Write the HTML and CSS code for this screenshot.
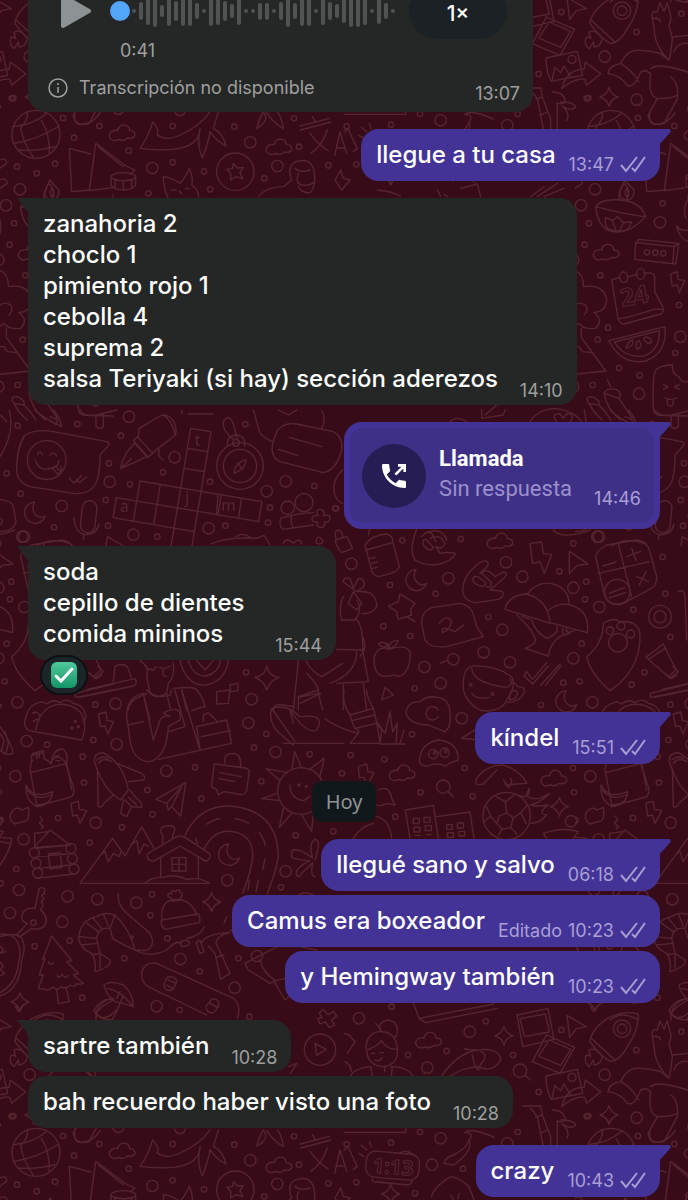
FILE: index.html
```html
<!DOCTYPE html>
<html lang="es">
<head>
  <meta charset="UTF-8">
  <meta name="viewport" content="width=device-width, initial-scale=1.0">
  <title>Chat</title>
  <link rel="stylesheet" href="styles.css">
</head>
<body>
  <!-- wallpaper -->
  <svg class="wallpaper" aria-hidden="true">
    <defs>
      <marker id="dot-s" markerUnits="userSpaceOnUse" markerWidth="24" markerHeight="24" refX="12" refY="12"><circle cx="12" cy="12" r="8"/></marker>
      <marker id="dot-l" markerUnits="userSpaceOnUse" markerWidth="44" markerHeight="44" refX="22" refY="22"><circle cx="22" cy="22" r="17"/></marker>
      <g id="cloud"><path d="M-28 20Q-44 10 -32 -4Q-22 -12 -12 -8Q-8 -28 12 -24Q24 -20 24 -8Q42 -8 40 8Q32 18 18 14Q4 26 -8 18Q-18 24 -28 20Z"/></g>
      <g id="moon"><path d="M0 -32A32 32 0 1 0 32 10Q14 20 2 6Q-12 -10 0 -32Z"/></g>
      <g id="spark"><path d="M0 -28Q6 -6 27 0Q6 6 0 28Q-6 6 -27 0Q-6 -6 0 -28Z"/></g>
      <g id="plane"><path d="M-28 -32L30 2L0 8L-20 34Z"/></g>

      <g id="doodles">
        <g transform="scale(.33333)">
          <circle cx="108" cy="403" r="72"/>
          <path d="M40 380Q100 375 140 340M42 430Q110 420 178 378M62 384Q70 430 100 472M124 362Q150 400 148 460M55 450Q110 455 165 440M62 384Q90 350 80 336"/>
          <path d="M208 445L272 462M208 445L215 575L272 570M287 430L268 572L340 562M287 430L378 498L405 510L392 522M295 440L370 500"/>
          <path d="M333 530A37 12 0 0 1 407 530A37 12 0 0 1 333 530V556Q345 570 370 570Q400 568 407 554V530M345 540V564M370 545V568M395 540V564"/>
          <path d="M150 540Q165 560 176 568Q180 592 160 600Q135 600 134 578Q140 560 150 540ZM155 565Q165 580 155 590Q145 580 155 565"/>
          <path d="M420 445Q470 452 520 448Q600 440 600 385Q590 440 607 474Q625 430 630 395Q650 425 678 438Q670 400 640 385L655 336M420 445Q446 410 458 365Q480 390 472 405Q500 425 540 405Q600 380 630 336"/>
          <path d="M224 340Q220 370 240 374Q280 372 300 338M770 385Q780 350 790 336Q810 360 775 382M800 338Q820 370 850 385Q845 350 832 336"/>
          <circle cx="706" cy="515" r="56"/>
          <path d="M700 490L712 504L730 502L720 518L728 536L708 530L692 540L692 520L680 508L698 506Z"/>
          <path d="M900 378Q940 368 988 355M902 390Q950 378 992 366M938 350L946 366M930 400Q960 440 985 452M982 390Q965 440 932 460M1004 466L1020 396L1040 460M1010 444H1036"/>
          <path d="M775 590Q800 560 850 560L875 540Q860 500 885 486Q930 470 942 510Q950 560 930 578Q905 580 895 560M885 505Q900 520 930 510M895 520Q885 550 905 555Q925 560 945 545"/>
          <path d="M505 595Q490 565 490 530Q520 535 540 550Q555 535 568 505Q582 540 575 555Q600 570 595 598M515 570H528M556 566H568M538 574L544 580"/>
          <path d="M0 480Q20 470 20 490L0 505M0 540Q20 530 22 550L0 565"/>
          <path d="M1005 540L1022 510L1030 535L1050 540L1025 570Z"/>
          <use href="#cloud" x="365" y="400"/><use href="#cloud" x="835" y="442"/>
          <path class="dots-s" d="M298 378L222 413L386 452L165 491L51 500L110 520L518 378L703 380L882 355L518 487L612 514L897 440L985 496L793 535L631 568L445 580L40 294"/>
          <path class="dots-l" d="M457 504L751 427L832 498L60 568L540 330L355 326"/>
        </g>

        <g transform="translate(0 -18) scale(.33333)">
          <circle cx="960" cy="149" r="47"/>
          <path d="M945 130L978 148L950 166ZM958 40L970 28L984 44L1000 34L1010 48L995 60L1004 76L988 82L976 66L960 72L954 56L966 52ZM735 -110L850 -170M735 -110L745 -90L810 -50Q850 -70 910 -70M780 -120Q790 -80 825 -60M820 -60L855 0L925 -60L905 -90"/>
          <path d="M105 60Q140 30 190 60M288 40Q300 0 340 -5M290 40Q310 70 350 30M865 200L890 190L872 220"/>
        </g>

        <g transform="translate(344 -18) scale(.33333)">
          <path d="M519 45L612 26L630 118L536 140ZM528 56L604 42L616 96L542 110ZM607 105L692 142L648 220L565 185ZM616 120L680 148L650 196L584 168Z"/>
          <path d="M606 228L700 208L716 280L622 298Q606 270 606 228ZM625 292L632 256L650 272L660 252L680 285"/><circle cx="684" cy="232" r="12"/>
          <path d="M653 320Q670 260 720 262L724 240L770 275L728 310L722 292Q690 288 653 320Z"/>
          <path d="M738 125Q740 90 790 55Q840 30 882 42Q885 90 850 140Q830 180 800 185Q770 170 738 125ZM742 115L815 182"/><circle cx="834" cy="86" r="26"/><circle cx="834" cy="86" r="14"/>
          <path d="M735 150Q755 140 775 170Q770 195 750 195L748 180L736 200Q720 190 725 170Q730 160 740 170Z"/>
          <path d="M925 110Q920 85 940 90L948 62L960 88L970 62L978 95Q985 110 975 130L985 170Q980 220 975 235Q940 200 932 160Q930 130 925 110ZM925 110Q945 105 950 120M985 165L1032 160M792 275Q795 250 830 245Q850 200 890 205Q940 210 950 215L975 235M792 275Q830 280 850 310Q870 320 890 270L905 265L920 275M830 245Q860 260 885 300M920 275Q910 340 940 350L912 400Q920 435 960 425L1000 350Q1005 300 980 285M940 350Q980 350 1000 340M990 210Q1000 180 1032 185M920 260Q940 240 1032 270M975 30Q1000 -10 1032 0M975 30Q985 60 1032 60"/>
          <path d="M535 318L590 318L595 345L620 410V440M560 325L580 350L598 440M595 345L575 352M610 390L588 400M625 330Q660 330 665 360Q650 370 640 362L640 440M650 360Q690 360 695 375Q680 390 655 372Q680 395 668 415"/>
          <path d="M65 145Q70 95 110 95Q155 95 160 145Q165 195 115 200Q70 195 68 150M68 150Q100 140 112 122Q130 150 160 148M112 95Q95 70 130 60Q160 62 160 90Q160 110 150 112M95 70L110 88M92 180Q105 188 115 172M82 160H92M108 158H118M20 228Q30 205 80 200M122 215V200M140 200Q190 200 208 228M80 200L85 228M145 200L142 228"/>
          <path d="M295 225Q340 160 400 150Q360 150 362 145Q385 155 420 148Q470 150 470 180Q450 220 400 200Q350 205 320 228M385 165Q390 200 402 210Q410 190 420 180Q430 160 410 155M300 490Q305 470 330 465Q370 440 370 430Q395 395 362 398Q380 380 450 412M300 490L330 495Q390 450 375 420"/>
          <path d="M190 -40L225 55L245 68L460 25M225 55L450 12M0 397H185V385M740 20L748 34L760 18"/>
          <rect x="66" y="458" width="160" height="78" rx="28" transform="rotate(5 146 497)"/>
          <path d="M84 536Q84 548 100 546L195 555Q205 550 204 542M45 460L60 470M52 436L68 450M76 425L82 440M170 458Q185 448 205 462"/>
          <text class="doodle-text" x="84" y="518" font-size="62" transform="rotate(4 84 518)">1:13</text>
          <path d="M262 590Q270 560 320 530Q350 535 375 560L390 600M320 585L328 598M345 580L342 596M0 100L15 105L34 125L10 160M0 185Q20 190 22 215M0 450L12 440L40 500L28 508"/>
          <use href="#spark" x="480" y="107"/><use href="#spark" x="795" y="345"/><use href="#spark" x="140" y="582"/>
          <use href="#cloud" x="252" y="122"/><use href="#plane" x="697" y="78"/>
          <circle cx="528" cy="212" r="20"/><path d="M542 226L560 240"/>
          <path class="dots-s" d="M425 64L308 153L192 165L507 165L652 90L877 150L1012 95L584 276L728 349L882 408L521 396L228 396L141 428L357 506L213 580L37 547L143 20L8 433"/>
          <path class="dots-l" d="M45 55L377 95L250 203L782 224L878 353L290 415L264 494L490 430"/>
        </g>

        <g transform="translate(344 190) scale(.33333)">
          <path d="M755 50Q770 25 830 30Q890 35 905 80Q850 75 755 50ZM755 50Q760 105 795 122Q850 140 905 80M825 26Q822 5 840 -20Q865 5 848 28M790 115Q780 95 785 82L805 92L820 80L838 98L862 96Q858 118 840 122Q812 125 790 115ZM805 92L815 118M838 98L828 120"/>
          <path d="M875 158L885 148L1005 160L995 222L872 208ZM875 158L990 170L1005 160M990 170L986 220"/>
          <circle cx="909" cy="187" r="8"/><circle cx="934" cy="188" r="8"/><circle cx="958" cy="190" r="8"/>
          <path d="M826 262L803 270L822 385Q828 403 840 402L950 372Q962 365 956 350L932 305V260Q930 245 904 250M852 260L876 254M822 385Q830 390 930 358L958 358"/>
          <ellipse cx="839" cy="262" rx="12" ry="16"/><ellipse cx="890" cy="252" rx="12" ry="16"/>
          <text class="doodle-text" x="834" y="350" font-size="74" transform="rotate(-10 834 350)">24</text>
          <path d="M795 452L963 410Q970 490 905 513Q830 525 795 452ZM812 456L946 422Q948 480 900 498Q840 505 812 456M846 474Q850 455 866 450Q870 470 846 474ZM880 478Q870 458 885 452Q900 468 880 478ZM912 460Q895 450 902 442Q920 440 924 456Z"/>
          <path d="M980 252L1000 245L1002 268L1022 272L1006 308L1000 285L984 288Z"/>
          <path d="M928 655Q925 560 935 540Q950 525 985 525Q985 555 1005 560Q1015 585 1040 570M928 655Q930 675 950 676L1032 678M958 584L972 590L958 598M1006 584L992 590L1006 598M962 624Q980 632 998 624M970 630Q968 650 982 648Q990 645 988 630"/>
          <path d="M672 235Q720 240 718 290Q780 280 788 330Q785 365 750 368Q780 390 755 415Q720 420 705 400Q690 415 672 410M685 355Q700 330 725 345Q735 360 720 375M712 415V442L785 543L672 555M672 500Q690 490 690 470L705 470L715 485L745 488M672 80Q700 80 695 115Q695 140 672 160"/>
          <path d="M735 640Q720 620 745 620Q770 630 765 645Q790 670 800 690M735 640L765 645M735 640Q750 670 775 690M780 610Q790 590 820 600Q835 610 825 625L865 685M780 610L825 625M780 610Q790 660 830 690M790 570L800 590"/>
          <path d="M998 108Q1010 125 1032 120M998 108Q1005 145 1032 155M1032 30Q1015 50 1025 85M1032 30V15"/>
          <path d="M100 0Q150 5 170 20M280 0L290 20M300 14L310 20M350 -5L400 -18L410 20M560 20L600 -10M580 20L640 -20M600 20L660 -5"/>
          <path class="dots-s" d="M671 41L735 100L956 40L722 164L769 256L792 413L761 449L1005 345L994 489L825 534L887 556L746 585"/>
          <path class="dots-l" d="M711 46L948 97L688 209L1009 440L688 590L885 611"/>
          <use href="#cloud" x="785" y="188"/>
        </g>

        <g transform="translate(0 410) scale(.33333)">
          <path d="M75 75Q110 55 160 65L320 95Q335 100 318 115L300 135Q300 200 285 225Q265 255 220 250L90 230Q50 215 50 180Q50 110 75 75Z"/>
          <circle cx="140" cy="150" r="58"/>
          <path d="M112 134Q118 118 128 134M150 136Q160 120 170 138M106 150Q120 195 172 166Q176 160 176 152M158 176L174 192Q190 186 182 168M168 172L180 182M208 204L222 220L244 198M230 208L238 218L260 200"/>
          <path d="M362 175Q370 130 405 100L440 140Q400 160 362 175ZM362 175L394 146M400 92L445 142L458 130L412 80ZM415 80L418 55L480 18Q505 8 522 35Q532 60 526 75L458 128M490 14Q515 30 526 75M478 118Q470 140 490 150"/>
          <path d="M572 55L512 415M633 65L573 425M572 55L633 65M562 115L623 125M552 175L613 185M420 213L786 275M349 263L776 335M339 323L583 365M420 213L400 333M481 223L461 343M664 255L654 315M725 265L715 325M786 275L776 335M349 263L339 323M654 255L650 314"/>
          <text class="doodle-letter" x="584" y="108" font-size="46">t</text><text class="doodle-letter" x="360" y="305" font-size="46">a</text><text class="doodle-letter" x="556" y="280" font-size="46">j</text><text class="doodle-letter" x="664" y="302" font-size="46">m</text>
          <circle cx="720" cy="168" r="70"/><circle cx="720" cy="168" r="50"/><circle cx="708" cy="98" r="10"/>
          <path d="M682 108Q680 75 710 75Q738 78 734 108M702 190Q702 160 738 148Q738 178 702 190ZM712 160L728 176M700 88Q665 60 670 35Q685 10 700 40L712 90"/>
          <path d="M830 65Q850 35 890 42L1000 65Q1030 80 1025 120Q1010 180 970 188L840 155Q810 140 818 100ZM868 82L965 110M835 118L893 136"/>
          <rect x="244" y="272" width="44" height="96" rx="22" transform="rotate(6 266 320)"/>
          <path d="M222 322Q225 370 256 374Q290 374 297 342M252 374L250 388"/>
          <circle cx="912" cy="278" r="27"/><circle cx="863" cy="293" r="20"/>
          <path d="M842 325Q880 312 940 308M842 325Q835 350 850 358L940 345M875 318Q870 340 880 352M950 303Q962 292 972 306L970 318Q990 310 990 325Q990 338 974 336Q975 355 960 352Q948 350 952 336Q935 338 936 325Q940 312 954 318Z"/>
          <path d="M0 268Q40 275 40 290L48 335Q40 365 0 365M0 325Q15 330 0 345M28 0Q45 70 0 140M105 0Q130 25 185 50Q180 20 160 0M165 45Q185 30 150 20M240 0Q250 20 290 15L350 0M288 15V50Q300 60 310 50V10M545 0V12M565 12H640M760 0L780 70Q800 90 818 95M835 0L865 15L890 0M965 0Q980 30 965 55M950 388Q955 375 965 388Q975 395 960 402Q945 402 950 388M850 400Q860 380 880 400Q900 380 905 402"/>
          <path d="M110 408Q150 380 210 400M318 408L322 380L370 408M632 402Q680 380 770 385L792 376L810 405M708 380Q730 365 750 382M1028 180Q995 210 1003 250Q1010 275 1028 280"/>
          <path d="M540 752Q560 830 618 825Q675 815 685 752M565 752Q580 800 618 798Q655 790 662 752M590 752L615 780L640 752M420 752Q450 770 440 800L450 850Q470 870 500 850L505 820Q525 800 520 760M440 775L460 780L468 770M478 772L495 776L510 768M490 780Q485 800 500 800M385 900Q385 870 440 850M500 850L512 900M520 835Q570 830 585 835Q610 860 615 892M545 840L560 900"/>
          <path d="M238 862L400 828Q415 820 405 806L262 838M340 815L345 770Q370 755 385 775L395 808M270 790L285 805L310 785L295 770M650 845L690 840L685 880L650 882ZM690 825L714 820V842L692 845ZM895 752L880 900M920 790Q960 830 955 850L895 862V900M918 752Q930 780 965 800L1028 760M955 850L968 900M820 900Q820 880 850 885L880 890"/>
          <use href="#moon" x="104" y="308"/>
          <path d="M800 768Q806 800 838 802Q808 812 800 840Q792 812 764 802Q795 798 800 768Z"/>
          <path class="dots-s" d="M53 47L232 42L363 77L327 160L20 190L390 223L489 187L62 251L162 352L317 270L324 347L472 380L630 215L736 43L943 228L676 347L810 293L804 338L1006 295L738 787"/>
          <path class="dots-l" d="M387 20L329 215L185 288L524 142L400 374L72 380L626 355L800 244L857 214"/>
        </g>

        <g transform="translate(330 410) scale(.33333)">
          <path d="M105 405Q125 375 170 372Q190 378 188 395L208 470Q205 488 145 500Q125 495 122 470ZM108 420L188 398M115 375L120 355M120 445L135 442M124 460L142 456M128 475L140 472M16 390L50 380L68 415L35 428Q18 410 16 390ZM18 385Q10 365 25 360Q40 365 38 382"/>
          <path d="M260 358Q235 420 255 450Q290 470 330 462Q370 450 376 430Q350 425 330 430L318 410M275 380Q290 360 305 370L318 395M280 405Q275 385 290 390L310 412Q300 430 280 405M300 385Q320 375 335 385L345 400Q340 420 318 410M295 365Q340 355 350 390"/>
          <path d="M398 540Q398 500 440 465Q465 445 475 458Q475 470 450 490M398 540Q400 575 440 578L505 568Q525 560 518 545Q500 540 480 540L522 505Q535 490 522 485L495 500Q470 470 455 490M430 515Q425 495 445 500L468 520Q460 540 430 515M455 490L482 515Q490 535 468 530"/>
          <path d="M797 440Q800 420 830 405L920 390Q950 395 958 420L980 500Q982 530 955 540L890 575Q860 590 835 575Q825 565 820 540ZM865 402L905 560M805 490L958 455M818 468L858 456M890 440L932 424M905 415L918 452M920 500L956 515M948 485L928 525M838 550L884 532M838 564L886 548"/><circle cx="862" cy="546" r="38"/>
          <path d="M525 598Q535 555 590 552Q655 570 660 640Q600 620 525 598ZM592 552Q620 515 660 520Q715 530 718 582M656 600Q690 575 720 585Q780 600 772 668L660 638M560 615Q600 650 610 675Q630 700 585 715L655 738Q660 700 690 680L720 668M575 618L600 628M605 630Q615 665 650 685Q690 670 680 648M700 655Q690 680 720 670M710 655Q705 675 735 660"/>
          <path d="M275 640Q275 600 310 592L390 580Q425 585 432 620L440 650L460 680L350 710Q300 715 285 690ZM328 640Q350 610 365 635Q360 660 338 668Q330 655 350 655L375 665L400 645"/>
          <path d="M178 718Q145 705 133 740Q128 785 155 798Q180 800 190 795Q210 805 225 788Q245 760 240 725Q225 700 178 718ZM178 718L172 700M145 700Q165 690 172 710Q155 715 145 700M178 710Q180 690 205 692Q200 710 178 715"/>
          <path d="M400 840Q395 780 425 768Q500 765 545 800Q560 830 530 870Q520 895 490 900M400 840Q410 880 450 900Q470 906 490 900M425 775Q430 820 530 832Q550 825 540 805M545 818Q560 820 562 830Q590 830 582 850Q570 875 532 878M540 870Q535 840 555 842Q570 845 555 865ZM425 850Q440 870 478 862"/><circle cx="422" cy="824" r="4"/><circle cx="487" cy="852" r="4"/>
          <path d="M582 798L608 822L655 768M608 808L650 758M582 798L590 785L606 806M632 826L690 762M646 826L694 766M600 400L635 396L640 430L665 434L643 490L630 455L608 460ZM718 424L774 462L742 466L718 490Z"/>
          <path d="M840 842Q780 790 770 740Q820 700 820 640Q850 620 870 635Q930 630 930 680Q930 780 840 842Z"/><circle cx="864" cy="698" r="28"/><circle cx="840" cy="662" r="11"/><circle cx="873" cy="648" r="12"/><circle cx="902" cy="672" r="12"/>
          <path d="M948 742L1000 702L1038 780L1015 800ZM955 748L1005 715M1015 800L1025 806L1040 795M962 850L1074 822M965 862L1074 840M962 850Q958 860 965 862M1045 545Q1065 535 1065 560L1070 690"/>
          <circle cx="990" cy="620" r="34"/><circle cx="990" cy="620" r="18"/>
          <path d="M40 515Q40 500 60 505L70 535L85 505Q105 505 102 530L80 545ZM70 545L55 580L80 600L95 580ZM40 560Q25 590 35 630L75 630Q100 600 80 570M85 545Q140 540 140 590Q125 615 95 610M75 625Q100 640 98 720L20 718M98 720L115 815L20 820M98 680Q115 710 90 740M40 825V900M100 820L110 900M0 820Q80 790 80 725"/>
          <path d="M175 588L205 575L210 552L255 580L242 598L245 615L205 628L200 605ZM230 620L255 635M155 870L165 832L190 855ZM350 752L332 760M455 25L520 15L525 0M455 25V0M465 15L500 -15M600 35Q620 0 670 -5Q730 0 755 35M680 35Q660 10 690 12L700 25L710 12Q735 10 722 35M360 35Q380 15 410 35M670 360Q690 385 750 370L780 360"/>
          <use href="#moon" x="258" y="510"/><use href="#moon" x="708" y="874"/>
          <use href="#cloud" x="508" y="394"/>
          <path class="dots-s" d="M217 391L392 387L180 525L317 551L160 649L241 678L254 835L475 621L700 818L749 814L755 701L765 568L769 515L730 400L688 484L998 441L1006 551L910 599L1021 681L943 787L905 824L633 885L17 295"/>
          <path class="dots-l" d="M64 461L355 505L283 771L332 820L461 727L540 757L517 659L528 457L577 500L802 380L730 533L808 591L730 745L370 748"/>
        </g>

        <g transform="translate(0 690) scale(.33333)">
          <path d="M88 122L245 150Q265 100 240 65Q200 30 150 50Q115 70 108 118M88 122Q65 110 80 75Q85 45 125 35L140 42Q160 25 180 38Q200 22 220 40Q250 45 255 70Q262 80 250 95M98 70Q115 60 120 80M100 95Q110 85 118 90"/>
          <circle cx="226" cy="94" r="3"/><circle cx="235" cy="110" r="3"/><circle cx="216" cy="114" r="3"/>
          <path d="M380 80Q380 20 430 10L460 150L480 90Q490 75 510 78L490 70Q500 60 525 58Q545 60 540 90L505 110Q500 200 450 215Q400 215 390 150ZM382 105L430 95M432 20L450 90M525 0L555 110L505 125M545 0L600 180M475 208L695 160L680 90L590 110L600 178M605 140L692 122M610 95V75L625 68L650 92M575 62L610 50M440 0Q470 30 510 15L515 0"/>
          <path d="M95 212L90 240L110 345Q150 340 215 320Q225 310 220 290L195 215Q170 185 150 220M92 248L200 220M98 212Q90 205 98 190L130 182L132 205L155 220M98 195L130 188M110 190V205M118 188V203M155 215Q160 175 190 178Q205 190 200 220L215 300M165 200L178 196M168 212H180M78 285Q100 330 158 305Q155 345 110 350Q75 330 78 285ZM82 300Q110 335 155 315"/>
          <path d="M283 215Q280 190 310 188Q370 220 385 300L362 330Q310 300 283 215ZM290 210Q310 195 325 205M295 220Q310 200 335 215M350 220L425 250Q440 262 430 270L385 275M292 235L295 350Q305 355 312 340L340 315M370 330L362 370L380 380L395 350L425 352Q430 340 405 320L390 300M375 330L395 350M385 322L410 345"/>
          <path d="M468 328L557 278L542 378L515 350L545 290M468 328L500 340L545 290M500 340L505 360L515 350"/>
          <path d="M645 222Q640 222 642 230L634 290L650 298L655 315L672 305L725 314Q738 312 740 300L748 245Q745 235 735 234ZM675 220Q670 190 700 190Q725 192 722 230M660 248L724 260M657 266L704 274"/>
          <circle cx="903" cy="303" r="70"/>
          <path d="M876 236L884 185L904 232M932 236L973 205L960 258M838 270L798 236L862 248M832 310L785 326L840 332M850 355L838 412L874 372M905 375L935 424L940 368M870 285Q870 325 910 332Q925 325 930 318"/><circle cx="897" cy="285" r="3"/><circle cx="919" cy="289" r="3"/>
          <path d="M104 470V430L145 425M104 470L150 420L210 465L104 472M120 378L128 390L118 398L130 410L124 416M106 475L212 465M112 500L200 492M118 535L210 525M110 565L222 552M145 492L180 488L186 532L150 537Z"/>
          <circle cx="103" cy="488" r="15"/><circle cx="108" cy="520" r="15"/><circle cx="113" cy="549" r="15"/><circle cx="213" cy="475" r="15"/><circle cx="217" cy="506" r="15"/><circle cx="222" cy="537" r="15"/>
          <path d="M240 580H628Q600 560 560 568Q520 550 490 562Q455 560 435 580M240 580L338 445L375 498L425 410L462 475M306 490L315 485L325 515L340 490L358 500L362 488M392 465L410 452L418 492L432 462L445 470"/>
          <path d="M442 492L525 442Q540 435 555 442L628 490Q635 505 618 514L540 468L460 514Q440 512 442 492ZM482 505V558M595 505V565M516 503H558V543H516ZM537 503V543M516 523H558M488 460V435Q475 420 490 410Q520 402 525 418Q522 430 518 435V445"/>
          <path d="M555 435Q600 345 690 348Q830 360 835 495Q835 520 802 612M612 478Q640 420 690 424Q760 430 758 500Q755 540 728 610M620 402Q640 388 660 385M705 386Q730 390 745 400M778 428Q795 450 795 468M795 505L788 540M775 570L768 605M748 570L744 600M586 445L592 460"/>
          <use href="#moon" x="686" y="494"/>
          <path d="M484 690L596 672Q602 690 598 698L495 718Q482 710 484 690ZM486 688Q480 640 515 630Q570 620 590 674M505 620Q500 605 515 612Q515 595 526 605Q540 592 540 608Q555 610 542 622Q545 635 530 630Q515 640 515 625Z"/>
          <path d="M236 745Q240 690 290 680Q320 660 350 680Q390 720 405 780Q360 760 338 745L330 715Q295 710 290 745L300 790L330 810Q335 830 285 845Q290 810 275 790Q240 775 236 745ZM260 700L295 725M280 685L305 715M310 672L325 708M345 675L330 715M240 740L288 745M245 765L290 760M300 790L275 795M300 795L300 835M355 610Q350 640 380 670L450 730Q470 770 435 782L405 780M405 780Q450 805 500 780Q540 740 545 770Q570 770 568 755Q550 745 540 760M560 745Q600 740 612 712"/><circle cx="396" cy="742" r="4"/>
          <path d="M588 758L600 750L612 785L600 790ZM605 758Q620 730 690 728Q650 735 648 760L690 850L662 868L645 790L625 768M648 802L672 795"/>
          <path d="M155 738L215 812L200 815L235 850L220 855L250 880Q230 885 230 880Q225 895 210 885Q195 900 185 890Q165 905 160 890Q140 905 135 898L115 895L130 855L118 855L135 805L128 808ZM170 898L175 940L208 935L198 893M146 815Q148 830 160 818M172 855Q175 870 186 852Q195 870 206 856"/>
          <path d="M312 885Q330 870 370 885Q400 910 400 950Q370 940 345 935Q315 910 312 885ZM320 895Q360 900 395 945M340 930Q300 950 288 970V990M360 940Q350 970 335 990M350 925L360 905M362 935L370 915"/>
          <path d="M425 850Q430 815 470 820L700 925Q725 945 712 985M425 850Q425 880 445 890L620 975M500 900Q485 890 498 870Q500 855 520 862Q538 870 525 885Q522 905 500 900ZM505 870L528 880M500 885L520 895M625 965Q610 950 628 938Q635 920 652 930Q662 945 650 955Q645 975 625 965ZM630 940L652 952"/>
          <path d="M65 680Q70 650 105 655L108 640L118 595Q125 590 135 598L132 612L125 616L132 628L124 634L130 645L122 660Q150 685 132 710Q115 722 95 715L60 740L50 735L82 700M82 700Q65 695 65 680"/><circle cx="100" cy="698" r="8"/>
          <path d="M0 740Q45 725 65 745Q80 770 65 810Q60 900 0 918M0 733Q40 728 55 760Q65 790 55 820Q50 880 0 908M0 768L10 780L0 790L18 785M0 815L10 830L0 838L14 850L0 858"/>
          <path d="M938 505Q900 475 878 480Q870 500 880 505Q905 512 930 512Q890 530 888 550Q895 570 905 550L938 518Q930 560 945 560M938 505Q925 460 945 448Q965 450 945 510"/>
          <path d="M0 442L35 445Q32 480 0 525M0 455L32 460M0 110Q40 170 38 190Q20 200 0 180M0 130L12 150L5 180M15 125L25 160L18 188M850 140Q800 100 815 55Q860 40 900 80Q980 70 950 120Q920 135 870 60L880 100M815 55L885 155M850 160H1032M895 20L955 0M900 40L962 10M850 140L880 165M890 620Q910 600 940 615M680 680L672 700M690 722Q715 720 730 690M840 770H900L950 780"/>
          <path d="M295 72L318 66L322 92L340 95L324 132L315 108L302 110ZM213 340L235 334L238 358L260 362L240 400L232 375L218 378ZM32 370Q50 345 65 360L85 352Q90 380 80 392L45 402Q25 390 32 370Z"/>
          <use href="#spark" x="635" y="636"/><use href="#spark" x="60" y="936"/>
          <path class="dots-s" d="M286 44L141 164L280 150L248 200L252 278L442 300L585 232L604 326L458 373L174 384L366 412L269 458L49 537L784 274L762 173L929 193L887 436L1000 424L456 613L451 676L209 752L104 769L373 805L502 745L599 844L715 805L247 923L539 960L748 980L843 592L799 132L2 390L2 580"/>
          <path class="dots-l" d="M52 37L347 41L80 153L350 163L46 259L499 243L287 398L71 448L57 600L203 619L292 628L30 669L187 695L409 638L541 807L771 798L704 893L470 949L682 571L857 544L827 186L745 99L755 28"/>
        </g>

        <g transform="translate(220 690) scale(.33333)">
          <path d="M558 70Q560 35 600 35Q620 15 655 22Q690 30 690 70Q695 110 675 125Q650 115 625 105Q570 105 558 70ZM655 60A20 20 0 1 0 655 80M598 215Q600 160 655 150Q715 155 715 210Q690 218 675 228Q650 215 625 228Q605 230 598 215Z"/>
          <circle cx="640" cy="192" r="14"/><circle cx="674" cy="188" r="14"/><circle cx="644" cy="188" r="4"/><circle cx="677" cy="184" r="4"/>
          <path d="M372 0Q365 40 390 75L460 55Q440 20 440 0M390 75L395 92L465 75L460 55M395 92L405 115L470 100L465 75M405 115Q420 120 415 130L390 160H480L485 120L470 100M315 85Q340 110 415 130M480 160L470 95L495 130L510 65L518 125L532 100L528 160M540 160L552 120M480 162H555"/>
          <path d="M415 230L440 222L444 245L462 248L440 290L432 262L418 262ZM725 145L780 110L775 175M725 145L775 150M770 265Q800 225 850 225Q900 240 920 280L855 285M770 265Q760 290 790 282L830 240M850 270L865 292Q880 280 872 265M475 300Q510 285 515 325L525 345L500 340Q480 350 470 345M470 380Q510 390 515 445M400 445Q420 410 460 400"/>
          <circle cx="670" cy="290" r="20"/><path d="M685 305L700 320"/>
          <path d="M570 445L556 360L640 346L655 445M650 380L750 366L762 445M580 385H598V401H580ZM612 382H630V397H612ZM582 412H600V426H582ZM616 407H634V422H616ZM584 436H600M618 434H634M680 404H697V418H680ZM712 399H730V414H712ZM682 428H700V442H682ZM716 424H734V438H716Z"/>
          <circle cx="860" cy="378" r="71"/>
          <path d="M838 378L860 368L880 384L872 412L846 418L830 400ZM828 320L856 335L882 315M856 335L860 368M800 350L812 378L792 395M812 378L830 400M922 345L902 368L918 400M902 368L880 384M846 418L835 436M872 412L890 432M890 315Q930 330 928 295Q905 330 960 325L990 310Q960 340 930 345Q960 350 985 345Q950 370 980 375Q960 400 932 400M970 430Q1030 410 1075 425L1060 445M970 430L980 445"/>
          <use href="#cloud" x="545" y="250"/><use href="#cloud" x="1000" y="266"/>
          <use href="#spark" x="1018" y="350"/>
          <path class="dots-s" d="M576 133L493 208L392 195L366 250L601 307L758 319L734 234L526 380L1062 307L1059 234L515 950"/>
          <path class="dots-l" d="M725 85L1053 394"/>
        </g>
      </g>

      <pattern id="tile" width="575" height="1018" patternUnits="userSpaceOnUse">
        <use href="#doodles"/>
        <use href="#doodles" x="-575"/>
        <use href="#doodles" y="1018"/>
        <use href="#doodles" y="-1018"/>
        <use href="#doodles" x="-575" y="1018"/>
      </pattern>

      <symbol id="ticks" viewBox="0 0 26 17">
        <path d="M1 9L6 15L17 1M12 12L15 15L25 1" fill="none" stroke="currentColor" stroke-width="2"/>
      </symbol>
    </defs>
    <rect class="fill" width="100%" height="100%" fill="url(#tile)"/>
  </svg>

  <main class="chat">
    <article class="bubble in voice">
      <div class="player">
        <button class="play" type="button" aria-label="Reproducir">
          <svg width="32" height="36" viewBox="0 0 32 36"><path d="M3 3L29 18L3 33Z" fill="#8d9294" stroke="#8d9294" stroke-width="4" stroke-linejoin="round"/></svg>
        </button>
        <div class="wave">
          <svg width="264" height="34" viewBox="0 0 264 34" aria-hidden="true">
            <path d="M2 17v0M9 10v14M16 5v24M23 3v28M30 13v8M37 4v26M44 9v16M51 4v26M58 4v26M65 11v12M72 17v0M79 4v26M86 5v24M93 9v16M100 12v10M107 5v24M114 17v0M121 17v0M128 11v13M135 11v13M142 17v0M149 10v14M156 3v28M163 11v12M170 4v26M177 4v26M184 17v0M191 5v24M198 10v14M205 12v10M212 7v20M219 3v28M226 3v28M233 5v24M240 17v0M247 6v22M254 11v12M261 17v0"/>
          </svg>
          <input class="seek" type="range" min="0" max="41" value="0" aria-label="Posición">
        </div>
        <button class="speed" type="button">1×</button>
      </div>
      <div class="elapsed">0:41</div>
      <div class="transcript">
        <svg width="22" height="22" viewBox="0 0 22 22" aria-hidden="true"><circle cx="11" cy="11" r="9" fill="none" stroke="currentColor" stroke-width="1.5"/><path d="M11 10v6M11 6v2" stroke="currentColor" stroke-width="1.5"/></svg>
        <span>Transcripción no disponible</span>
        <time class="meta">13:07</time>
      </div>
    </article>

    <article class="bubble out tail">
      <p>llegue a tu casa</p>
      <div class="meta"><time>13:47</time><svg class="ticks"><use href="#ticks"/></svg></div>
    </article>

    <article class="bubble in tail">
      <p>zanahoria 2<br>choclo 1<br>pimiento rojo 1<br>cebolla 4<br>suprema 2<br>salsa Teriyaki (si hay) sección aderezos</p>
      <div class="meta"><time>14:10</time></div>
    </article>

    <article class="bubble out tail call">
      <div class="call-card">
        <span class="call-icon">
          <svg width="32" height="32" viewBox="0 0 24 24" aria-hidden="true"><path d="M20 15.500c-1.250 0-2.450-.2-3.570-.57-.35-.11-.74-.03-1.020.24l-2.200 2.200c-2.830-1.440-5.150-3.750-6.590-6.580l2.200-2.210c.28-.27.36-.66.25-1.010C8.700 6.450 8.500 5.250 8.500 4c0-.55-.45-1-1-1H4c-.55 0-1 .45-1 1 0 9.390 7.610 17 17 17 .55 0 1-.45 1-1v-3.500c0-.55-.45-1-1-1z" fill="#fff"/><path d="M13 11L20 4M15 4H20V9" fill="none" stroke="#fff" stroke-width="2"/></svg>
        </span>
        <div class="call-text">
          <strong>Llamada</strong>
          <span>Sin respuesta</span>
        </div>
        <time class="meta">14:46</time>
      </div>
    </article>

    <article class="bubble in tail reacted">
      <p>soda<br>cepillo de dientes<br>comida mininos</p>
      <div class="meta"><time>15:44</time></div>
      <button class="reaction" type="button" aria-label="Reacción">
        <svg width="28" height="28" viewBox="0 0 28 28">
          <defs><linearGradient id="green" x2="0" y2="1"><stop offset="0" stop-color="#51c99b"/><stop offset="1" stop-color="#149568"/></linearGradient></defs>
          <rect x="1" y="1" width="26" height="26" rx="6" fill="url(#green)"/>
          <path d="M6 15L11 20L22 8" fill="none" stroke="#fff" stroke-width="3" stroke-linecap="round"/>
        </svg>
      </button>
    </article>

    <article class="bubble out tail">
      <p>kíndel</p>
      <div class="meta"><time>15:51</time><svg class="ticks"><use href="#ticks"/></svg></div>
    </article>

    <div class="day">Hoy</div>

    <article class="bubble out tail">
      <p>llegué sano y salvo</p>
      <div class="meta"><time>06:18</time><svg class="ticks"><use href="#ticks"/></svg></div>
    </article>
    <article class="bubble out next">
      <p>Camus era boxeador</p>
      <div class="meta"><span>Editado</span><time>10:23</time><svg class="ticks"><use href="#ticks"/></svg></div>
    </article>
    <article class="bubble out next">
      <p>y Hemingway también</p>
      <div class="meta"><time>10:23</time><svg class="ticks"><use href="#ticks"/></svg></div>
    </article>

    <article class="bubble in tail">
      <p>sartre también</p>
      <div class="meta"><time>10:28</time></div>
    </article>
    <article class="bubble in next">
      <p>bah recuerdo haber visto una foto</p>
      <div class="meta"><time>10:28</time></div>
    </article>

    <article class="bubble out tail">
      <p>crazy</p>
      <div class="meta"><time>10:43</time><svg class="ticks"><use href="#ticks"/></svg></div>
    </article>
  </main>
</body>
</html>
```

FILE: styles.css
```css
* {
  box-sizing: border-box;
}
body {
  margin: 0;
  position: relative;
  min-height: 100vh;
  overflow: hidden;
  background-color: #380b18;
  color: #fff;
  font-family: Inter, "Noto Sans", sans-serif;
  font-size: 24px;
  line-height: 31px;
}
button {
  border: none;
  padding: 0;
  font: inherit;
  color: inherit;
  cursor: pointer;
}
p {
  margin: 0;
}

/* wallpaper */
.wallpaper {
  position: absolute;
  inset: 0;
  width: 100%;
  height: 100%;
  fill: none;
  stroke: #54252f;
  stroke-width: 4;
  stroke-linecap: round;
  stroke-linejoin: round;
}
.fill {
  stroke: none;
}
.dots-s {
  stroke: none;
  marker: url(#dot-s);
}
.dots-l {
  stroke: none;
  marker: url(#dot-l);
}
marker circle {
  stroke: #54252f;
}
.doodle-text {
  font-family: "Noto Sans", sans-serif;
  font-weight: 700;
  stroke-width: 3;
}
.doodle-letter {
  font-family: "Noto Sans", sans-serif;
  fill: #54252f;
  stroke: none;
}

/* messages */
.chat {
  position: relative;
  display: flex;
  flex-direction: column;
  align-items: flex-start;
  gap: 17px;
  margin-top: -20px;
  padding: 0 28px 3px;
}
.bubble {
  position: relative;
  display: flex;
  align-items: flex-end;
  padding: 10px 14px 5px 15px;
  border-radius: 18px;
}
.bubble p {
  padding-bottom: 6px;
  font-weight: 500;
}
.next {
  margin-top: -13px;
}
.in {
  background-color: #242726;
  gap: 22px;
}
.out {
  align-self: flex-end;
  background-color: #433396;
  gap: 13px;
}
.in.tail {
  border-top-left-radius: 0;
}
.out.tail {
  border-top-right-radius: 0;
}
.tail::before {
  content: "";
  position: absolute;
  top: 0;
  width: 12px;
  height: 16px;
  background-color: inherit;
}
.in.tail::before {
  left: -11px;
  clip-path: polygon(0 0, 100% 0, 100% 100%);
}
.out.tail::before {
  right: -11px;
  clip-path: polygon(0 0, 90% 0, 100% 15%, 0 100%);
}
.meta {
  display: flex;
  align-items: center;
  gap: 6px;
  flex-shrink: 0;
  font-size: 18px;
  line-height: 22px;
  color: #a09f9f;
}
.in .meta,
.call .meta {
  margin-bottom: -2px;
}
.out .meta {
  color: #a99fd6;
}
.ticks {
  width: 26px;
  height: 17px;
  margin-bottom: 2px;
}

/* voice note */
.voice {
  flex-direction: column;
  align-items: stretch;
  gap: 0;
  width: 505px;
  padding: 0 13px 8px 19px;
  border-radius: 0 0 18px 18px;
  color: #a09f9f;
  font-size: 18px;
}
.player {
  display: flex;
  align-items: center;
  height: 61px;
}
.play {
  margin-left: 13px;
  width: 32px;
  height: 36px;
  background: none;
}
.play svg {
  display: block;
}
.wave {
  position: relative;
  display: flex;
  justify-content: flex-end;
  width: 286px;
  margin-left: 18px;
}
.wave svg {
  stroke: #505352;
  stroke-width: 4;
  stroke-linecap: round;
}
.seek {
  position: absolute;
  inset: 0;
  width: 100%;
  margin: 0;
  appearance: none;
  background: none;
}
.seek::-webkit-slider-thumb {
  appearance: none;
  width: 20px;
  height: 20px;
  border-radius: 50%;
  background-color: #53a4fb;
}
.speed {
  margin-left: auto;
  margin-right: 13px;
  padding-top: 6px;
  width: 98px;
  height: 56px;
  border-radius: 28px;
  background-color: #1c2125;
  color: #fff;
  font-size: 21px;
  font-weight: 500;
}
.elapsed {
  margin-left: 73px;
  line-height: 20px;
}
.transcript {
  display: flex;
  align-items: center;
  gap: 10px;
  padding-top: 11px;
  line-height: 32px;
}
.transcript .meta {
  margin-left: auto;
  align-self: flex-end;
  line-height: 24px;
}

/* call */
.call {
  padding: 6px;
}
.call-card {
  display: flex;
  align-items: center;
  padding: 16px 13px 15px 12px;
  border-radius: 13px;
  background-color: #3f3087;
  font-family: Roboto, sans-serif;
  font-size: 22px;
  line-height: 30px;
}
.call-icon {
  display: grid;
  place-items: center;
  width: 64px;
  height: 64px;
  border-radius: 50%;
  background-color: #271d55;
}
.call-text {
  display: flex;
  flex-direction: column;
  margin: 0 22px 4px 13px;
}
.call-text span {
  color: #9a90cc;
}
.call .meta {
  align-self: flex-end;
  font-family: Inter, sans-serif;
}

/* reaction */
.reacted {
  min-width: 308px;
  margin-bottom: 35px;
  justify-content: space-between;
}
.reaction {
  position: absolute;
  left: 12px;
  bottom: -35px;
  display: grid;
  place-items: center;
  width: 48px;
  height: 40px;
  border: 2px solid #0c1114;
  border-radius: 20px;
  background-color: #1b2628;
}

.day {
  align-self: center;
  padding: 5px 14px;
  border-radius: 10px;
  background-color: #11181b;
  color: #8f9495;
  font-family: "Noto Sans", sans-serif;
  font-size: 20px;
}
```
